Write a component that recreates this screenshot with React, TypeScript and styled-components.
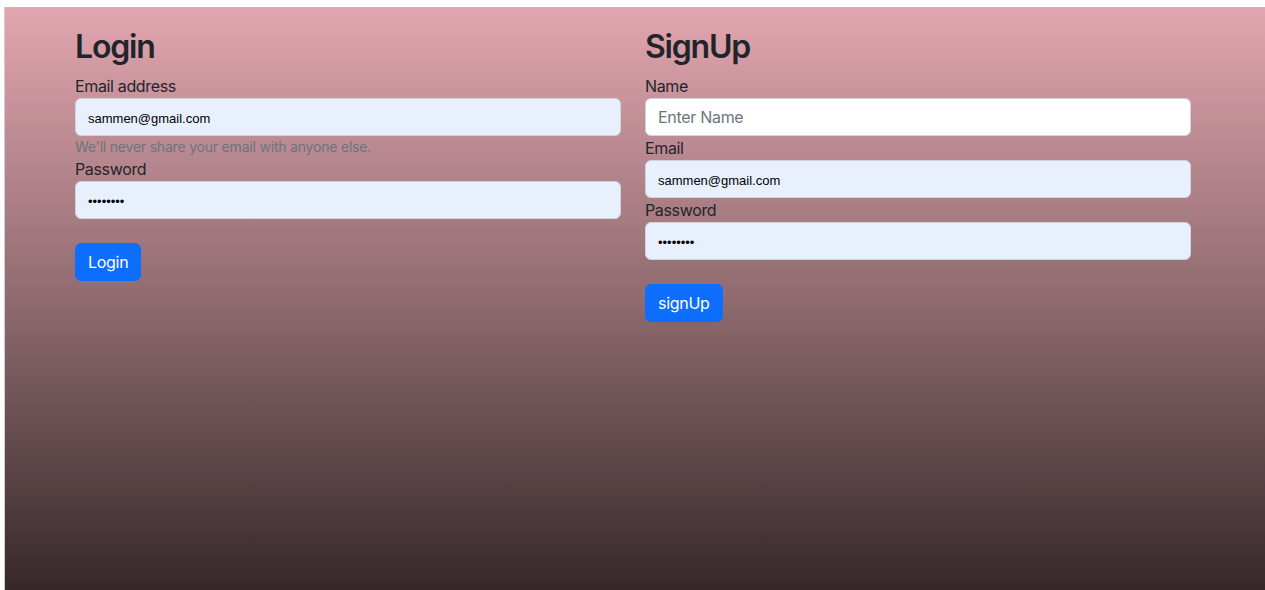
import React from "react";
import styled, { createGlobalStyle } from "styled-components";

const Global = createGlobalStyle`
  html, body { margin: 0; padding: 0; background: #ffffff; }
  body {
    font-family: Inter, "Noto Sans", sans-serif;
    color: #212529;
    font-size: 16px;
    line-height: 1.5;
  }
  * { box-sizing: border-box; }
`;

const Page = styled.div`
  padding: 7px 0 0 4px;
  height: 590px;
  overflow: hidden;
`;

const Backdrop = styled.div`
  height: 583px;
  border-left: 1px solid #cfcfcf;
  background: linear-gradient(to bottom, #e3a6b0 0%, #8f6b70 50%, #362829 100%);
  padding: 21px 0 0 70px;
`;

const Columns = styled.div`
  display: grid;
  grid-template-columns: 546px 546px;
  column-gap: 24px;
  align-items: start;
`;

const Form = styled.form`
  display: flex;
  flex-direction: column;
`;

const Heading = styled.h2`
  margin: 0 0 8px;
  font-size: 32px;
  line-height: 38.4px;
  font-weight: 600;
  color: #212529;
  letter-spacing: -1.2px;
`;

const Label = styled.label`
  display: block;
  font-size: 16px;
  line-height: 24px;
  color: #212529;
  letter-spacing: -0.35px;
`;

const Input = styled.input<{ $filled?: boolean }>`
  display: block;
  width: 100%;
  height: 38px;
  padding: ${(p) => (p.$filled ? "7px 12px 5px" : "6px 12px")};
  border: 1px solid #ced4da;
  border-radius: 6px;
  background: ${(p) => (p.$filled ? "#e8f0fe" : "#ffffff")};
  color: #000000;
  font-family: ${(p) => (p.$filled ? '"Liberation Sans", Arial, sans-serif' : 'Inter, "Noto Sans", sans-serif')};
  font-size: ${(p) => (p.$filled ? "13px" : "16px")};
  letter-spacing: ${(p) => (p.$filled ? "0" : "-0.3px")};
  outline: none;
  &::placeholder {
    color: #6c757d;
    opacity: 1;
  }
`;

const Help = styled.div`
  font-size: 14px;
  line-height: 21px;
  color: #6c757d;
  letter-spacing: -0.2px;
`;

const Button = styled.button`
  align-self: flex-start;
  margin-top: 24px;
  height: 38px;
  padding: 6px 12px;
  border: 1px solid #0d6efd;
  border-radius: 6px;
  background: #0d6efd;
  color: #ffffff;
  font-family: Inter, "Noto Sans", sans-serif;
  font-size: 16px;
  line-height: 24px;
  letter-spacing: -0.3px;
  cursor: pointer;
`;

export default function App() {
  return (
    <>
      <Global />
      <Page>
        <Backdrop>
          <Columns>
            <Form onSubmit={(e) => e.preventDefault()}>
              <Heading>Login</Heading>
              <Label htmlFor="le">Email address</Label>
              <Input id="le" $filled type="email" defaultValue="sammen@gmail.com" />
              <Help>We'll never share your email with anyone else.</Help>
              <Label htmlFor="lp">Password</Label>
              <Input id="lp" $filled type="password" defaultValue="12345678" />
              <Button type="submit">Login</Button>
            </Form>
            <Form onSubmit={(e) => e.preventDefault()}>
              <Heading>SignUp</Heading>
              <Label htmlFor="sn">Name</Label>
              <Input id="sn" type="text" placeholder="Enter Name" />
              <Label htmlFor="se">Email</Label>
              <Input id="se" $filled type="email" defaultValue="sammen@gmail.com" />
              <Label htmlFor="sp">Password</Label>
              <Input id="sp" $filled type="password" defaultValue="12345678" />
              <Button type="submit">signUp</Button>
            </Form>
          </Columns>
        </Backdrop>
      </Page>
    </>
  );
}
